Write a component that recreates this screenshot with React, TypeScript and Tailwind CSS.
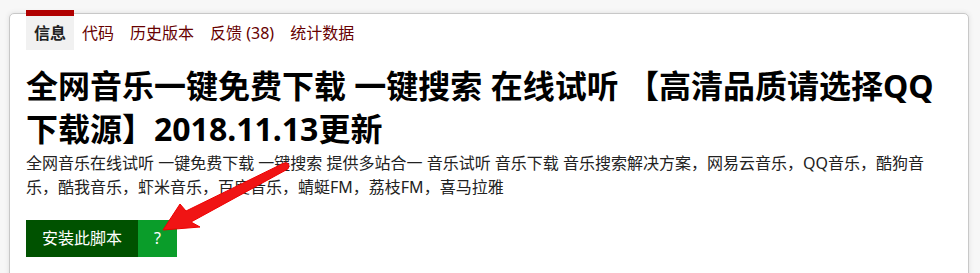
export default function App() {
  const tabs = ['代码', '历史版本', '反馈 (38)', '统计数据']

  return (
    <div
      className="relative h-[273px] overflow-hidden bg-[#f7f7f7] pl-[9px] pr-[11px] pt-[13px]"
      style={{ fontFamily: '"Noto Sans", "Open Sans", "Noto Sans CJK SC", sans-serif' }}
    >
      <div className="min-h-[300px] rounded-[5px] border border-[#c8c8c8] bg-white px-4 shadow-[0_0_5px_#ddd]">
        <ul className="-mt-[4px] flex text-[16px] leading-[34px]">
          <li className="border-t-[6px] border-[#b00000] bg-[#f1f1f1] px-2 font-bold text-[#222]">信息</li>
          {tabs.map((t) => (
            <li key={t} className="border-t-[6px] border-transparent px-2 text-[#670000]">
              {t}
            </li>
          ))}
        </ul>

        <h2 className="mt-[14px] text-[32px] font-bold leading-[43px] text-black">
          全网音乐一键免费下载 一键搜索 在线试听 【高清品质请选择QQ下载源】2018.11.13更新
        </h2>
        <p className="mt-px text-[16px] leading-[24px] text-[#222]">
          全网音乐在线试听 一键免费下载 一键搜索 提供多站合一 音乐试听 音乐下载 音乐搜索解决方案，网易云音乐，QQ音乐，酷狗音乐，酷我音乐，虾米音乐，百度音乐，蜻蜓FM，荔枝FM，喜马拉雅
        </p>

        <div className="mt-[21px] flex h-[37px] text-[16px] leading-[37px] text-white">
          <a className="bg-[#005200] px-4">安装此脚本</a>
          <a className="bg-[#0a9d2a] px-4">?</a>
        </div>
      </div>

      <svg className="pointer-events-none absolute left-0 top-0" width="980" height="273" viewBox="0 0 980 273">
        <path
          d="M163 230 L180 204 L186 211 L284 163 Q289 162 289 166 Q289 169 286 170 L191 222 L200 227 Z"
          fill="#f01414"
          stroke="#e00"
          strokeWidth="1"
          strokeLinejoin="round"
        />
      </svg>
    </div>
  )
}
